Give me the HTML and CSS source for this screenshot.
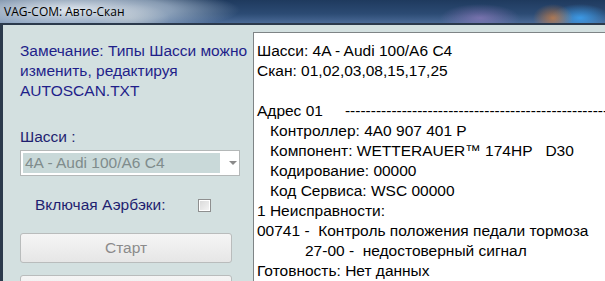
FILE: index.html
```html
<!DOCTYPE html>
<html lang="ru">
<head>
    <meta charset="UTF-8" />
    <title>VAG-COM: Авто-Скан</title>
    <link rel="stylesheet" href="styles.css">
</head>
<body>
<div id="window">
    <div id="titlebar">VAG-COM: Авто-Скан</div>
    <div id="client">
        <div id="left">
            <div class="note">Замечание: Типы Шасси можно изменить, редактируя AUTOSCAN.TXT</div>
            <div class="label">Шасси :</div>
            <div class="select">
                <div class="select-value">4A - Audi 100/A6 C4</div>
                <div class="select-arrow"></div>
            </div>
            <div class="check-row">
                <span class="label">Включая Аэрбэки:</span>
                <span class="checkbox"></span>
            </div>
            <div class="btn">Старт</div>
            <div class="btn"></div>
        </div>
        <div id="log">
            <div>Шасси: 4A - Audi 100/A6 C4</div>
            <div>Скан: 01,02,03,08,15,17,25</div>
            <div>&nbsp;</div>
            <div>Адрес 01<span class="dashes">--------------------------------------------------------------</span></div>
            <div class="ind1">Контроллер: 4A0 907 401 P</div>
            <div class="ind1">Компонент: WETTERAUER™ 174HP&nbsp;&nbsp; D30</div>
            <div class="ind1">Кодирование: 00000</div>
            <div class="ind1">Код Сервиса: WSC 00000</div>
            <div>1 Неисправности:</div>
            <div>00741 -&nbsp; Контроль положения педали тормоза</div>
            <div class="ind2">27-00 -&nbsp; недостоверный сигнал</div>
            <div>Готовность: Нет данных</div>
            <div>&nbsp;</div>
            <div>Адрес 02</div>
        </div>
    </div>
</div>
</body>
</html>
```

FILE: styles.css
```css
* { box-sizing: border-box; }
body {
    margin: 0;
    width: 605px;
    height: 281px;
    overflow: hidden;
    font-family: 'Liberation Sans', Arial, sans-serif;
}
#window {
    display: flex;
    flex-direction: column;
    height: 281px;
    overflow: hidden;
    background: #1d3a5c;
}
#titlebar {
    height: 23px;
    padding: 4px 0 0 4px;
    font-family: 'Open Sans', 'DejaVu Sans', sans-serif;
    font-size: 12px;
    line-height: 15px;
    color: #000;
    background:
        radial-gradient(ellipse 170px 24px at 70px 10px, rgba(235,240,245,0.95), rgba(200,215,230,0.6) 60%, rgba(200,215,230,0) 100%),
        radial-gradient(ellipse 40px 14px at 130px 18px, rgba(180,180,170,0.6), rgba(180,180,170,0)),
        radial-gradient(ellipse 40px 14px at 480px 18px, rgba(160,130,200,0.6), rgba(160,130,200,0)),
        radial-gradient(ellipse 20px 14px at 553px 18px, rgba(220,130,60,0.7), rgba(220,130,60,0)),
        radial-gradient(ellipse 30px 14px at 580px 18px, rgba(60,160,240,0.9), rgba(60,160,240,0)),
        linear-gradient(#1f3a5e, #2c4b74 60%, #4a6a96);
}
#client {
    flex: 1;
    display: flex;
    min-height: 0;
    background: #d3e0e0;
    border-top: 2px solid #2b3a4c;
    border-left: 3px solid #2b3a4c;
}
#left {
    width: 250px;
    padding: 16px 0 0 17px;
}
.note {
    width: 236px;
    font-size: 15.5px;
    line-height: 20px;
    color: #1f1f8a;
}
.label {
    font-size: 15.5px;
    line-height: 20px;
    color: #1f1f70;
}
#left > .label {
    margin-top: 26px;
}
.select {
    display: flex;
    align-items: center;
    width: 220px;
    height: 26px;
    margin-top: 3px;
    padding: 2px;
    background: #fff;
    border: 1px solid #b4b8b8;
}
.select-value {
    width: 197px;
    height: 20px;
    padding-left: 2px;
    background: #c9d9d9;
    color: #7f8c8c;
    font-size: 15.5px;
    line-height: 20px;
}
.select-arrow {
    margin-left: 9px;
    width: 0;
    height: 0;
    border-left: 4px solid transparent;
    border-right: 4px solid transparent;
    border-top: 4px solid #8a8a8a;
}
.check-row {
    display: flex;
    align-items: center;
    margin-top: 19px;
    padding-left: 15px;
}
.checkbox {
    width: 13px;
    height: 13px;
    margin-left: 32px;
    border: 1px solid #8e8f8f;
    background: linear-gradient(135deg, #d8d8d8, #f6f6f6);
    box-shadow: inset 0 0 0 1px #fff;
}
.btn {
    width: 212px;
    height: 30px;
    margin-top: 18px;
    border: 1px solid #b9bcbc;
    border-radius: 3px;
    background: linear-gradient(#f5f5f5, #e6e6e6);
    color: #8b8b8b;
    text-align: center;
    font-size: 15.5px;
    line-height: 28px;
}
.btn + .btn {
    margin-top: 12px;
}
#log {
    flex: 1;
    min-width: 0;
    margin-top: 7px;
    padding: 8px 0 0 3px;
    background: #fff;
    border-left: 1px solid #7e8486;
    border-top: 1px solid #7e8486;
    font-size: 15.5px;
    line-height: 20px;
    color: #000;
    overflow: hidden;
    white-space: nowrap;
}
.dashes { margin-left: 22px; }
.ind1 { padding-left: 13px; }
.ind2 { padding-left: 48px; }
```
